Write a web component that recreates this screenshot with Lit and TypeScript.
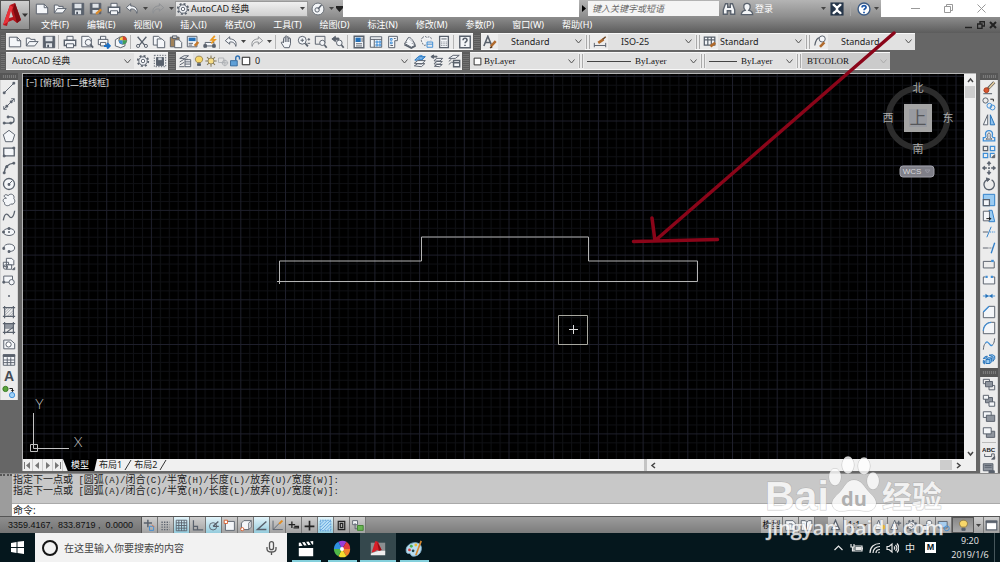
import { LitElement, html, css, svg, nothing, type SVGTemplateResult } from "lit";
import { customElement, property } from "lit/decorators.js";
import { classMap } from "lit/directives/class-map.js";

/* 16x16 glyphs. g = slate stroke, b = blue stroke, f = pale fill, k = solid slate. */
const ICONS: Record<string, SVGTemplateResult> = {
  new: svg`<path class="f" d="M1.500 2.500h9l4 4v7h-13z"/><path d="M10.500 2.500v4h4"/>`,
  open: svg`<path class="f" d="M1.500 12.500v-9h4l1 1.500h5v2.500"/><path class="f" d="M1.500 12.500l3.500-5h10l-4 5z"/>`,
  save: svg`<path class="k" d="M1.500 1.500h13v13h-13z"/><path fill="#dfe3e8" stroke="none" d="M4 2h8v5H4zM4.500 9.500h7v4.500h-7z"/><path fill="#4b535f" stroke="none" d="M6 11h2v3H6z"/>`,
  saveas: svg`<path class="k" d="M1.500 1.500h12v12h-12z"/><path fill="#dfe3e8" stroke="none" d="M4 2h7v4.500H4zM4 9h7v4H4z"/><path stroke="#d98a2b" stroke-width="2.500" d="M8 13.500l6-5"/>`,
  print: svg`<path class="f" d="M4.500 6V1.500h7V6"/><path class="f" stroke-width="1.600" d="M1.500 6h13v6h-13z"/><path class="f" d="M4 10h8v4.500H4z"/>`,
  preview: svg`<path class="f" d="M2 1.500h8l3 3v9H2z"/><circle class="f" cx="9.500" cy="8.500" r="3.500"/><path stroke-width="2" d="M12 11l3 3.500"/>`,
  publish: svg`<path class="f" d="M4 5V1.500h6V5M1.500 5h11v6h-11z"/><path class="f" d="M4 8.500h6v4H4z"/><path stroke="#1c6fc4" stroke-width="2.400" d="M8 12.500h5M11.500 9.500l3 3-3 3"/>`,
  dwf: svg`<path class="f" d="M1.500 5.500l5-3 6 2v8l-5 2-6-2z"/><circle cx="10" cy="6" r="4.500" fill="#f3d24a"/><path fill="#d8452f" stroke="none" d="M10 6V1.500A4.500 4.500 0 0 1 14.500 6z"/><path fill="#3da05c" stroke="none" d="M10 6h4.500A4.500 4.500 0 0 1 10 10.500z"/><path fill="#3d8fd8" stroke="none" d="M10 6v4.500A4.500 4.500 0 0 1 5.500 6z"/>`,
  cut: svg`<path stroke-width="1.500" d="M3 2l8 9.500M13 2L5 11.500"/><circle cx="3.500" cy="12.500" r="1.800"/><circle cx="12.500" cy="12.500" r="1.800"/>`,
  copy: svg`<path class="f" d="M1.500 1.500h6l2.500 2.500v7.500h-8.500z"/><path class="f" d="M6 4.500h5.500l3 3v7H6z"/>`,
  paste: svg`<path fill="#a0825a" d="M1.500 2.500h10v11h-10z"/><path fill="#ccc" d="M4 1h5v3H4z"/><path class="f" d="M6.500 5.500h5l3 3v6h-8z"/>`,
  match: svg`<path class="f" d="M1.500 1.500h11v12h-11z"/><path fill="#2370b8" stroke="none" d="M3 3h8v4H3z"/><path d="M3 9.500h5M3 11.500h4"/><path stroke="#c77a2c" stroke-width="3" d="M10 12.500l4-4.500"/>`,
  block: svg`<path class="f" d="M2.500 8.500h10v4h-10z"/><path class="k" d="M1 11h3v3H1zM11 11h3v3h-3z"/><path stroke="#eb9a22" stroke-width="2" d="M13.500 1l-4 4.500h4l-4 4"/>`,
  undo: svg`<path class="f" d="M6.500 2L1.500 6.500l5 4V8C10 7.500 12.500 9 13.500 13c1.500-5-1.500-8.500-7-8.500z"/>`,
  redo: svg`<path fill="none" stroke="#8c9094" d="M9.500 2l5 4.500-5 4V8C6 7.500 3.500 9 2.500 13 1 8 4 4.500 9.500 4.500z"/>`,
  pan: svg`<path class="f" d="M5 14.500L1.500 9c0-1.500 1.500-1.500 2.500 0V4c0-1.500 2-1.500 2 0V2c0-1.500 2-1.500 2 0v1c0-1.500 2-1.500 2 0v1.500c0-1.500 2-1.500 2 0V10l-1.500 4.500zM6 4v4M8 3v5M10 4v4"/>`,
  zoomrt: svg`<circle class="f" cx="6" cy="6" r="4.500"/><path stroke-width="2" d="M9.500 9.500l3 3.500"/><path d="M4 6h4M6 4v4M12 5h3M13.500 3.500v3M12 9.500h3"/>`,
  zoomwin: svg`<path d="M1.500 1.500h11v8M1.500 1.500v9H7"/><circle class="f" cx="9.500" cy="9" r="3"/><path stroke-width="2" d="M12 11.500l2.500 3"/>`,
  zoomprev: svg`<path class="k" d="M1 4.500L5 1.500v2h4v2H5v2z"/><circle class="f" cx="9.500" cy="9" r="3.200"/><path stroke-width="2" d="M12 11.500l2.500 3"/>`,
  props: svg`<path class="f" stroke-width="1.600" d="M2.500 1.500h11v13h-11z"/><path fill="#2370b8" stroke="none" d="M4 3h6v5H4z"/><path d="M4.500 10h7M4.500 12.500h7M11.500 3v5"/>`,
  dcenter: svg`<path class="f" d="M1.500 2h13v12h-13zM1.500 5h13M6 5v9"/><path class="b" d="M8 7h2v2H8zM11.500 7h2v2h-2zM8 10.500h2v2H8zM11.500 10.500h2v2h-2z"/>`,
  palette: svg`<path class="f" d="M3 1.500h10v5h-3v8H3z"/><path class="b" d="M5 4h2v2H5zM5 8h2v2H5z"/><path d="M9 4h2M5 12h3"/>`,
  sheet: svg`<path class="f" d="M1.500 9.500l5-2.500 8 4.500-5 2.500z"/><path class="f" d="M3 8L6 3l7.500 7"/><path class="f" d="M6 3c2-1 4 1 7.500 7"/><path stroke-width="1.600" d="M1.500 11l8 4 5-2.500"/>`,
  markup: svg`<path class="f" stroke-dasharray="2 1.300" d="M3 3c2-2.500 4-1 5 0 3-2 6 0 4.500 3M3 3c-2 2-2 4 0 6 0 3 3 3.500 4 2"/><path class="b" d="M8 8h6.500v6H8zM8 10.500h6.500"/>`,
  calc: svg`<path class="f" stroke-width="1.500" d="M3 1.500h10v13H3z"/><path d="M5 4.500h6M5 8h1M7.500 8h1M10 8h1M5 10h1M7.500 10h1M10 10h1M5 12h1M7.500 12h1M10 12h1"/>`,
  help: svg`<path class="f" stroke-width="1.600" d="M2 1.500h12v13H2z"/><path stroke-width="1.800" d="M5.800 6c0-3 4.500-3 4.500 0 0 1.500-2.200 1.500-2.200 3.300M8 11v1.500"/>`,
  gear: svg`<circle class="f" cx="8" cy="8" r="4.800"/><circle cx="8" cy="8" r="6" stroke-width="2" stroke-dasharray="2.300 2.400"/><circle fill="#fff" cx="8" cy="8" r="2"/>`,
  wsave: svg`<path stroke-dasharray="1.500 1.500" d="M1.500 1.500h13v13h-13z"/><path class="k" d="M4 4h8v9H4z"/><path fill="#cfd4da" stroke="none" d="M6 4h4v3H6z"/>`,
  layers: svg`<path class="f" d="M2 5l5-3h5l-4 3zM2 9l5-3h4M2 12.500l5-3M1.500 14.500h6"/><path class="f" d="M8 6.500h6.500v8H8zM8 9h6.500M8 11.500h6.500"/>`,
  bulb: svg`<path fill="#f7d76a" stroke="#8a7440" d="M5.500 10C1 6 3.500 1.500 8 1.500S15 6 10.500 10z"/><path class="k" d="M6 11.500h4v2.500H6z"/>`,
  sun: svg`<path stroke="#857a58" stroke-width="1.400" d="M8 .5v15M.5 8h15M2.700 2.700l10.600 10.600M13.300 2.700L2.700 13.300"/><circle cx="8" cy="8" r="4" fill="#f6dc85" stroke="#857a58"/>`,
  freeze: svg`<g opacity=".4"><path d="M2 4h7v6H2z"/><circle cx="10.500" cy="10.500" r="3.500"/><path d="M10.500 6v9M6 10.500h9"/></g>`,
  lock: svg`<path stroke="#2a6daf" stroke-width="1.800" d="M9 7V4c0-3.500 5-3.500 5 0v2"/><path fill="#5f9fd6" stroke="#2a5f93" d="M2 7.500h9v7H2z"/>`,
  swatch: svg`<path fill="#fff" stroke="#222" stroke-width="1.600" d="M2 2h12v12H2z"/>`,
  lay1: svg`<path fill="#7db7e8" stroke="#2370b8" d="M2 7l4-4h8l-4 4z"/><path class="f" d="M1.500 10.500l4-3h8.500l-4 4zM1.500 13.500l4-2.500h8l-4 3.500z"/><circle class="b" cx="9" cy="4" r="2.500"/>`,
  lay2: svg`<path class="k" d="M1 3l3-2v1.500h4v1H4V5z"/><path class="f" d="M5 7l3-2h6.500l-3 3H5zM5 10.500l3-2h6l-3 3H5zM5 14l3-2h6l-3 2.500z"/>`,
  lay3: svg`<path class="f" d="M2 5l5-3.500h7L9.500 5zM2 8.500l3-2.500M2 12l3-2.500h2"/><path class="f" stroke-width="1.600" d="M7.500 7.500h7v7h-7zM7.500 10h7"/>`,
  style: svg`<path stroke-width="1.800" d="M1 12.500L5.500 1.500 9.500 11M3 8.500h5"/><path stroke="#b06a2c" stroke-width="2.800" d="M9 13l5.500-6"/><path stroke="#5d3a1c" stroke-width="2" d="M8 14.500l2.500-1"/>`,
  dimstyle: svg`<path d="M1.500 9v5M14.500 9v5M1.500 12h13"/><path stroke="#b06a2c" stroke-width="3" d="M6 9l6-4"/><path stroke="#6b4424" stroke-width="1.600" d="M11 5l3.500-3"/>`,
  tabstyle: svg`<path class="f" stroke-width="1.400" d="M1.500 2.500h12v9h-12zM1.500 5.500h12M5.500 2.500v9M9.500 2.500v9"/><path stroke="#b06a2c" stroke-width="3" d="M8.500 13l5.500-4"/>`,
  mlstyle: svg`<path stroke-width="1.400" d="M2 12c1-6 3-9 6-9"/><circle class="f" cx="10.500" cy="4.500" r="3.500"/><path stroke="#b06a2c" stroke-width="3" d="M8 13.500l5-5"/>`,

  line: svg`<path d="M2.500 13.500l11-11"/><path class="k" d="M1.500 12.500h2v2h-2zM12.500 1.500h2v2h-2z"/>`,
  xline: svg`<path d="M2 14L14 2M10.500 2H14v3.500M2 10.500V14h3.500"/><path class="k" d="M4.500 9.500h2v2h-2zM9.500 4.500h2v2h-2z"/>`,
  pline: svg`<path stroke-width="1.500" d="M7 4.500h3c5 0 5 7 0 7H2.500"/><path class="k" d="M6 3.500h2v2H6zM1.500 10.500h2v2h-2zM9 10.500h2v2H9z"/>`,
  polygon: svg`<path class="f" d="M8 1.500l6.500 5-2.500 8H4l-2.500-8z"/>`,
  rect: svg`<path class="f" stroke-width="1.500" d="M2 3.500h12v9H2z"/><path class="k" d="M12.500 2.500h2v2h-2zM1.500 11.500h2v2h-2z"/>`,
  arc: svg`<path stroke-width="1.500" d="M2.500 14C3 7 7 3 14 2.500"/><path class="k" d="M1.500 12.500h2v2h-2zM12.500 1.500h2v2h-2zM4.500 5.500h2v2h-2z"/>`,
  circle: svg`<circle class="f" cx="8" cy="8" r="6.300" stroke-width="1.500"/><path d="M8 8l3.500-3.500"/><path class="k" d="M7 7.500h2v2H7z"/>`,
  cloud: svg`<path class="f" d="M5 6C0 4 3.500 0 7 3c3-3.500 8-1 6.500 3.500C16 9 14 14 10 12.500 7.500 16 2 14.500 3 11-.5 9 2 5.500 5 6z"/>`,
  spline: svg`<path stroke-width="1.500" d="M1.500 13C3 4 6 5 8 8s5 3 6.500-6"/>`,
  ellipse: svg`<ellipse class="f" cx="8" cy="8" rx="6.500" ry="4"/><path class="k" d="M7.500 7.500h1v1h-1zM.8 7h2v2h-2zM7 3h2v2H7z"/>`,
  earc: svg`<path class="f" d="M2 8c0-6 12.500-6 12.500 0 0 3-3 4-6.500 4"/><path class="k" d="M1 7.500h2v2H1zM7 11h2v2H7z"/>`,
  insert: svg`<path class="f" d="M5 1.500h6l2.500 2.500v5H5zM1.500 6h6v5h-6z"/><path class="f" d="M5 9h6v5H5z"/><circle cx="4" cy="11.500" r="2.500"/><path class="k" d="M14.500 12v2.500H12z"/>`,
  mkblock: svg`<path class="f" d="M2 3.500h10v7H2z"/><circle class="f" cx="11" cy="10.500" r="3"/><path class="k" d="M1 9.500h2v2H1z"/>`,
  point: svg`<path class="k" d="M7.500 7.500h1v1h-1z"/>`,
  hatch: svg`<path stroke-width=".8" stroke="#8d949d" d="M3 6l3-3M3 9l6-6M3 12l9-9M6 13l7-7M9 13l4-4"/><path stroke-width="1.300" d="M3 1v14M13 1v14M1 3h14M1 13h14"/>`,
  gradient: svg`<path fill="#9298a1" stroke="none" d="M3 3h10v6H3z"/><path stroke-width="1.300" d="M3 1v14M13 1v14M1 3h14M1 13h14M5 13l8-6"/>`,
  region: svg`<path class="f" d="M2 3.500h8l4.500 4v6H2z"/><circle fill="#fff" cx="7.500" cy="8.500" r="3"/>`,
  table: svg`<path class="f" d="M1.500 2h13v12h-13zM1.500 8h13M1.500 11h13M6 5v9M10 5v9"/><path class="k" d="M1.500 2h13v2h-13z"/>`,
  addsel: svg`<circle cx="4" cy="4.500" r="3" fill="#5aa33c" stroke="#3a7a25"/><circle cx="11.500" cy="11.500" r="3" fill="#9fd0f5" stroke="#3d8fd8"/><path stroke="#111" d="M8.500 4h3.500v3M10.500 6l1.500 1.500L13.500 6"/>`,

  erase: svg`<path stroke="#555" stroke-width="3.400" d="M7 8.500l7-7"/><path stroke="#e8cfa0" stroke-width="1.800" d="M8 8l6-6.500"/><circle cx="5" cy="10.500" r="2.800" fill="#d9562f" stroke="#a63c1c"/><path stroke-width="1.200" d="M1.500 14.500h10"/>`,
  dup: svg`<circle cx="4" cy="4" r="3"/><circle class="b" cx="8.500" cy="10" r="2.800"/><circle class="b" cx="12" cy="12" r="2.800"/><path stroke="#222" d="M9.500 2.500h3.500V5"/>`,
  mirror: svg`<path class="f" d="M6.500 2v11.500H1.500z"/><path fill="#8fc2ee" stroke="#2370b8" d="M9.500 2v11.500h5z"/>`,
  offset: svg`<path class="b" stroke-width="1.500" d="M1.500 13.500V10c4 0 3-2 2.500-4C3.500 .5 12.500.5 12 6c-.5 2-1 4 2.500 4v3.500z"/><path d="M4.500 11.500c3-1 2-4 2-5 0-2.500 3-2.500 3 0 0 1-1 4 2 5z"/>`,
  array: svg`<path stroke-width="1.400" d="M1.500 1.500h5v5h-5z"/><path class="b" stroke-width="1.400" d="M9.500 1.500h5v5h-5zM1.500 9.500h5v5h-5zM9.500 14.500v-5h5"/><path class="k" d="M14.500 11v3.500H11z"/>`,
  move: svg`<path stroke-width="1.600" stroke-dasharray="4 1.500 2 1.500" d="M8 1.500v13M1.500 8h13"/><path class="k" d="M8 .5l2 2.500H6zM8 15.500l2-2.500H6zM.5 8L3 6v4zM15.500 8L13 6v4z"/>`,
  rotate: svg`<path stroke-width="1.500" d="M6 3a6 6 0 1 0 5 .3"/><path class="k" d="M5 1l4 1.500-3 2.500z"/>`,
  scale: svg`<path fill="#9acbf2" stroke="#2f7fc9" d="M1.500 1.500h13v13h-13z"/><path class="f" stroke-width="1.400" d="M1.500 7.500h7v7h-7z"/>`,
  stretch: svg`<path fill="#9acbf2" stroke="#2f7fc9" d="M8 1.500h3.500l3 13H8z"/><path class="f" d="M1.500 2.500h7v11h-7z"/><path stroke="#111" d="M5 11h5M8.500 9.500L10 11l-1.500 1.500"/>`,
  trim: svg`<path stroke="#2f7fc9" d="M10.500 2l-5 12"/><path d="M1 8h6"/><path class="b" stroke-dasharray="1.500 1" d="M9 8h6"/>`,
  extend: svg`<path stroke="#2f7fc9" stroke-width="1.500" d="M14.500 2l-4 12"/><path d="M1 8h5"/><path stroke-dasharray="1.500 1" d="M6 8h6"/>`,
  brkpt: svg`<path d="M11 5H1.500v7.500H14V5"/><path class="b" stroke-width="2.600" d="M10.500 4.500h3"/>`,
  brk: svg`<path class="f" d="M4 4.500H1.500v8h13v-8H12"/><path class="b" stroke-width="2.600" d="M4 4.500h2.500M10 4.500h2.500"/>`,
  join: svg`<path class="b" d="M1 8h14"/><path fill="#2370b8" stroke="none" d="M4 5.500L7.500 8 4 10.500zM12 5.500L8.500 8l3.500 2.500z"/>`,
  chamfer: svg`<path class="f" d="M1.500 14.500V8L8 1.500h6.500v13z"/><path class="b" stroke-width="1.500" d="M1.500 8L8 1.500"/>`,
  fillet: svg`<path class="f" d="M1.500 14.500V11c0-5 4-9.500 9-9.500h4v13z"/><path class="b" stroke-width="1.500" d="M1.500 11c0-5 4-9.500 9-9.500"/>`,
  blend: svg`<path d="M1.500 14.500C2 11 2 9 4 7M12 9c2-2 2-4 2.500-7.500"/><path class="b" stroke-width="1.500" d="M4 7c3-5 5 5.500 8 2"/>`,
  explode: svg`<path fill="#9acbf2" stroke="#2370b8" d="M4.500 7.500l2.500-2h4v4.500l-2 2H4.500zM4.500 7.500H9V12M9 7.500l2-2"/><path fill="#9acbf2" stroke="#2370b8" d="M1.500 6.500L3 4.500l3-1-.5 2zM8 2.500l4-.5 2.500 1.500v3l-2 3v-5zM1.500 8.500l1.500.5v3.500l-1.500-1z"/>`,
  front: svg`<path d="M1.500 1.500h7v5h-7zM8 8.500h6.500v5H8z"/><path fill="#8e949d" d="M4 4h8v6H4z"/>`,
  back: svg`<path fill="#8e949d" d="M4 4h8v6H4z"/><path class="f" d="M1.500 1.500h6v4.500h-6zM8 9h6.500v5H8z"/>`,
  above: svg`<path class="f" d="M1.500 2h9v6.500h-9z"/><path fill="#8e949d" d="M5 6h9.500v7H5z"/>`,
  under: svg`<path fill="#8e949d" d="M5 6h9.500v7H5z"/><path class="f" d="M1.500 2h9v7h-9z"/>`,
  annofront: svg`<text x="0" y="6.500" font-size="7" font-weight="700" stroke="none" fill="#222" font-family="Liberation Sans, sans-serif">ABC</text><path d="M3 9v3h8V9h3v5"/><path class="k" d="M14.500 12v3H11z"/>`,
  hatchback: svg`<path fill="#8e949d" d="M1.500 2h11v8h-11zM3 4h8M3 6h8"/><path class="k" d="M8 10h6v5H8z"/>`,

  infer: svg`<path stroke-width="1.800" d="M6 1v9M1 5h10"/><path class="b" d="M8 9h5v5H8z"/><path stroke="#e06a3a" d="M11 7l3 3"/>`,
  snap: svg`<path stroke-width="1.600" stroke-dasharray="1.600 1.600" d="M3 4h10M3 7h10M3 10h10M3 13h10"/>`,
  grid: svg`<path d="M1.500 1.500h13v13h-13zM4.700 1.500v13M8 1.500v13M11.300 1.500v13M1.500 4.700h13M1.500 8h13M1.500 11.300h13"/>`,
  ortho: svg`<path stroke-width="1.500" d="M3 1.500v12h12M3 9h5v4.500"/>`,
  polar: svg`<circle cx="7.500" cy="9" r="4.500"/><path stroke-width="1.600" d="M7.500 9l6.500-6M7.500 9h7"/>`,
  osnap: svg`<path class="f" d="M3 3h11v11H3z"/><path stroke="#d95b2a" fill="#fff" d="M1.500 1.500h4v4h-4z"/>`,
  osnap3: svg`<path class="f" d="M3 5l3-3h9v8l-3 3H3z"/><path d="M12 13V5l3-3"/><circle cx="4" cy="12.500" r="2" fill="#fff" stroke="#d95b2a"/>`,
  otrack: svg`<path stroke-width="1.800" d="M14 3L3 13h11"/>`,
  ducs: svg`<path d="M2.500 2v11h12M2.500 13l8-8"/><path stroke="#e38b1e" stroke-width="2.500" d="M10 6l4-4"/>`,
  dyn: svg`<path stroke="#222" stroke-width="1.600" d="M6 3v8M2 7h8M8 11h6V9H9"/>`,
  lwt: svg`<path stroke="#222" stroke-width="2" d="M8 2v12M2 9h12"/>`,
  tpy: svg`<path fill="#b8def5" stroke="#2f7fc9" stroke-dasharray="1 1" d="M1.500 1.500h13v13h-13z"/><path class="b" stroke-width=".8" d="M2 6l4-4M2 10l8-8M2 14L14 2M6 14l8-8M10 14l4-4"/>`,
  qp: svg`<path stroke="#222" stroke-width="1.500" d="M4 3h8v10H4zM6.500 5.500h3v5h-3z"/>`,
  sc: svg`<path class="f" d="M2 2h6v5H2z"/><path d="M5 5v7h3"/><path fill="#67b552" stroke="#3c7f2c" d="M8 8h7v6H8z"/>`,
  paper: svg`<path class="f" d="M2 2h9l3 3v9H2z"/><path d="M6 6h4v5"/>`,
  book: svg`<path class="f" d="M1.500 2h5l2 2 2-2h4v12h-13zM8 4v9"/>`,
  anno: svg`<path class="f" stroke-width="1.600" d="M8 1.500L13 13H3z"/><path d="M5 9h6"/>`,
  annostar: svg`<path class="f" d="M7 1.500L11 13H2z"/><circle cx="12" cy="10" r="3" fill="#f1b737" stroke="none"/>`,
  annoplus: svg`<path class="f" d="M7 1.500L11 13H2z"/><path stroke-width="1.500" d="M12 2v6M9 5h6"/>`,
  padlock: svg`<path class="f" d="M2 8h8v6H2zM7 8V4c0-3 6-3 6 0v2"/>`,
  hw: svg`<path fill="#a6cdee" d="M1.500 3h11v8h-11z"/><circle class="b" cx="12" cy="11.500" r="3"/>`,
  clean: svg`<path fill="#fff" stroke-width="1.500" d="M1.500 2.500h13v11h-13z"/><path class="k" d="M1.500 2.500h13v2h-13z"/>`,
  navi: svg`<circle fill="#f3f5f7" stroke="#686e76" cx="8" cy="8" r="6.800"/><circle cx="7" cy="9" r="2.500"/><path stroke-width="1.800" d="M8 8l4-4.500"/>`,
  binoc: svg`<path fill="#f3f5f7" stroke-width="1.500" d="M4 2h2.500v4h3V2H12l2.500 7v5H10v-4H6v4H1.500V9z"/>`,
  person: svg`<path fill="#f3f5f7" stroke-width="1.500" d="M1.500 14.500c0-4 3-4.500 4.500-5C3 6 4 1.500 8 1.500S13 6 10 9.500c1.500.5 4.500 1 4.500 5z"/>`,
  xchg: svg`<path fill="#26364a" stroke="none" d="M.5.500h15v15H.5z"/><path stroke="#fff" stroke-width="2.600" d="M3.500 2.500c2 3 4.500 2 4.500 5.500s-2.500 2.500-4.500 5.500M12.500 2.500c-2 3-4.500 2-4.500 5.500s2.500 2.500 4.500 5.500"/>`,
  qmark: svg`<circle fill="#fff" stroke="#3c5c86" stroke-width="1.600" cx="8" cy="8" r="6.800"/><path stroke="#1d57a8" stroke-width="2" d="M5.800 6.300c0-3 4.500-3 4.500 0 0 1.500-2.200 1.500-2.200 3M8 11v1.800"/>`,
};

const icon = (name: string) =>
  svg`<svg class="icon" viewBox="0 0 16 16" aria-hidden="true">${ICONS[name] ?? nothing}</svg>`;

const shared = css`
  * { box-sizing: border-box; }
  .icon { width: 14px; height: 14px; fill: none; stroke: #59616c; stroke-width: 1.1; flex: none; display: block; }
  .icon .f { fill: #f4f6f9; }
  .icon .k { fill: #59616c; }
  .icon .b { stroke: #3f8ed6; }
  button { border: 0; padding: 0; margin: 0; background: none; font: inherit; color: inherit; display: flex; align-items: center; justify-content: center; flex: none; }
  select, input { border: 0; margin: 0; padding: 0; background: none; font: inherit; color: inherit; min-width: 0; outline: none; }
  select { appearance: none; }
`;

@customElement("cad-combo")
class CadCombo extends LitElement {
  @property() label = "";
  @property() value = "";
  @property({ type: Boolean }) disabled = false;
  static styles = [
    shared,
    css`
      :host { display: flex; align-items: center; background: #e1e1e1; height: 16px; min-width: 0; }
      select { flex: 1; height: 100%; }
      .chev { width: 7px; height: 5px; fill: none; stroke: #555; stroke-width: 1; margin-right: 3px; flex: none; }
      :host([disabled]) { background: #cbcbcb; color: #8a8a8a; }
      :host([disabled]) .chev { stroke: #aaa; }
      select:disabled { opacity: 1; }
    `,
  ];
  render() {
    return html`<slot></slot>
      <select aria-label=${this.label} ?disabled=${this.disabled}><option>${this.value}</option></select>
      <svg class="chev" viewBox="0 0 7 5" aria-hidden="true"><path d="M.5.500l3 3.500 3-3.500" /></svg>`;
  }
}

@customElement("app-root")
class AppRoot extends LitElement {
  static styles = [
    shared,
    css`
      :host { display: flex; flex-direction: column; position: relative; height: 100vh; overflow: hidden; background: #666; color: #222; font: 10px/12px "Noto Sans", "Noto Sans CJK SC", sans-serif; }

      .head { display: grid; grid-template-columns: 30px 1fr; background: linear-gradient(#a9a9a9, #8a8a8a 50%, #8c8c8c 52%, #5c5c5c); flex: none; height: 33px; }
      .logo { width: 30px; height: 30px; border: 1px solid #555; background: linear-gradient(#d0d0d0, #8d8d8d); }
      .logo svg { width: 28px; height: 28px; }
      .bars { display: flex; flex-direction: column; min-width: 0; }
      .title { display: flex; height: 17px; background: #fff; }
      .qat, .info { display: flex; align-items: center; background: linear-gradient(#b4b4b4, #8d8d8d); }
      .qat { padding-left: 3px; width: 313px; flex: none; }
      .qat button { width: 18px; height: 16px; }
      .qat button.drop { width: 8px; }
      .tri { width: 5px; height: 3px; fill: #444; }
      .workspace { display: flex; align-items: center; flex: 1; height: 16px; background: linear-gradient(#f0f0f0, #cfcfcf); border: 1px solid #999; margin-right: 1px; padding: 0 2px 0 0; }
      .workspace select { flex: 1; height: 14px; padding-left: 1px; font-size: 9px; }
      .spacer { flex: 1; }
      .info { width: 302px; flex: none; color: #fff; }
      .info .play { width: 9px; }
      .info .play svg { width: 4px; height: 7px; }
      .info input { width: 131px; height: 15px; background: #f4f4f4; font-size: 9px; font-style: italic; padding-left: 4px; color: #666; }
      .info input::placeholder { color: #666; opacity: 1; }
      .info .tool { width: 17px; margin-left: 1px; }
      .info .login { flex: 1; justify-content: flex-start; font-size: 9px; }
      .info .badge { width: 18px; }
      .info .aid { margin-left: 4px; padding-left: 4px; width: 22px; border-left: 1px solid #a8a8a8; }
      .info .drop { width: 9px; }
      .win { display: flex; width: 119px; flex: none; justify-content: flex-end; padding-right: 2px; }
      .win button { width: 33px; height: 17px; }
      .win svg { width: 9px; height: 9px; fill: none; stroke: #999; }
      .menu { display: flex; align-items: center; gap: 18px; height: 16px; padding: 0 3px 0 11px; color: #fff; font-size: 9px; }
      .menu button { white-space: nowrap; }
      .mdi { display: flex; gap: 4px; margin-left: auto; }
      .mdi svg { width: 8px; height: 8px; fill: none; stroke: #222; stroke-width: 1.400; display: block; }

      .row { display: flex; flex: none; height: 17px; margin-bottom: 2px; }
      .row.second { height: 18px; margin-bottom: 3px; }
      .grip { width: 6px; flex: none; background: repeating-linear-gradient(#5a5a5a 0 1px, #727272 1px 2px); border: 1px solid #5e5e5e; }
      .grip.wide { width: 8px; }
      .bar { display: flex; align-items: center; background: #ececec; flex: none; border: 1px solid #f8f8f8; border-width: 1px 0; font-size: 9px; }
      .bar button { width: 17px; height: 15px; }
      .bar button.drop { width: 9px; }
      .bar .sep { width: 1px; height: 14px; background: #b5b5b5; margin: 0 2px 0 1px; }
      .bar .div { width: 4px; height: 14px; border: 1px solid #aaa; border-width: 0 1px; margin: 0 1px; flex: none; }
      .std { width: 87px; padding-left: 13px; }
      .std.near { padding-left: 2px; }
      .spacecombo { width: 128px; padding-left: 6px; }
      .layer { width: 218px; }
      .layer .icon { width: 12px; height: 12px; }
      .layer .icon:last-child { width: 10px; margin-right: 4px; }
      .by { font-family: "Liberation Serif", serif; font-size: 9px; color: #111; }
      .by .icon { width: 9px; height: 9px; margin: 0 2px 0 3px; }
      .color { width: 108px; }
      .ltype { width: 116px; }
      .lweight { width: 90px; }
      .rule { width: 44px; height: 1px; background: #444; margin: 0 4px 0 3px; flex: none; }
      .rule.short { width: 28px; }
      .plot { width: 88px; padding-left: 5px; }

      .work { display: grid; grid-template-columns: 18px 1fr 18px; column-gap: 4px; flex: 1; min-height: 0; padding-right: 2px; }
      .tools { display: flex; flex-direction: column; min-height: 0; overflow: hidden; }
      .tools .stack { background: #ececec; display: flex; flex-direction: column; align-items: center; border: 1px solid #d6d6d6; border-width: 0 1px; flex: none; }
      .tools button { width: 16px; height: 16px; }
      .hgrip { height: 7px; background: repeating-linear-gradient(90deg, #5a5a5a 0 1px, #7a7a7a 1px 2px); border: 2px solid #565656; flex: none; }
      .mid { height: 9px; border-width: 3px 2px; }
      .tools .sep { width: 14px; height: 1px; background: #bbb; margin: 1px 0 2px; }
      .tools .letter { font: 700 14px/16px "Liberation Sans", sans-serif; color: #444b55; }

      .doc { display: grid; grid-template: minmax(0, 1fr) 12px / minmax(0, 1fr) 12px; border: 1px solid #b5b5b5; border-width: 1px 0 0 1px; margin-bottom: 2px; background: #f0f0f0; }
      .model { background: #000; position: relative; overflow: hidden; }
      .drawing { width: 100%; height: 100%; display: block; }
      .viewlabel { position: absolute; left: 3px; top: 3px; color: #ddd; font-size: 9px; display: flex; gap: 3px; }
      .cube { position: absolute; right: 8px; top: 5px; width: 76px; height: 102px; display: block; }
      .vscroll { display: flex; flex-direction: column; align-items: center; background: #f0f0f0; }
      .vscroll button, .hscroll button { width: 12px; height: 12px; }
      .vscroll svg, .hscroll svg { width: 7px; height: 7px; fill: none; stroke: #444; stroke-width: 1.500; }
      .vthumb { width: 10px; height: 12px; background: #cdcdcd; }
      .tabs { grid-column: 1 / -1; display: flex; background: #f0f0f0; font-size: 9px; }
      .tabnav { display: flex; }
      .tabnav button { width: 10px; height: 12px; border-right: 1px solid #ccc; }
      .tabnav svg { width: 7px; height: 7px; fill: #777; }
      .tab { display: flex; align-items: center; padding: 0 2px; color: #222; font-size: 9px; height: 12px; }
      .tab.on { background: #000; color: #fff; padding: 0 8px; clip-path: polygon(0 0, 100% 0, 92% 100%, 14% 100%); }
      .slash { width: 8px; height: 12px; stroke: #333; fill: none; }
      .hscroll { margin-left: auto; width: 332px; display: flex; align-items: center; border-left: 3px solid #c4c4c4; }
      .hthumb { width: 12px; height: 10px; background: #cdcdcd; margin-left: auto; }
      .corner { width: 12px; height: 12px; }

      .cmd { display: grid; grid-template-columns: 12px 1fr; background: #c8c8c8; border-top: 1px solid #8a8a8a; flex: none; height: 44px; border-bottom: 1px solid #555; }
      .cmdgrip { background: #9c9c9c; border-top: 2px dotted #555; }
      .cmdbody { display: flex; flex-direction: column; }
      .log { flex: 1; padding: 1px; font: 9px/11px "Liberation Mono", monospace; white-space: pre; }
      .log p { margin: 0; height: 11px; }
      .cjk { font-family: "Liberation Mono", "Noto Sans CJK SC", sans-serif; font-size: 10px; line-height: 11px; }
      .prompt { display: flex; align-items: center; height: 13px; background: #fff; border-top: 1px solid #aaa; font-size: 10px; padding-left: 1px; }
      .prompt input { flex: 1; height: 12px; }

      .status { display: flex; align-items: center; height: 16px; flex: none; background: linear-gradient(#9c9c9c, #7c7c7c); }
      .coords { width: 142px; padding-left: 8px; height: 16px; font: 9px/17px "Liberation Sans", sans-serif; color: #111; background: linear-gradient(#8e8e8e, #747474); border-right: 1px solid #555; white-space: pre; }
      .status button { height: 16px; min-width: 16px; background: linear-gradient(#cfcfcf, #a2a2a2); border-right: 1px solid #777; }
      .status button.on { background: linear-gradient(#e4f4fa, #94cbdc); }
      .status .icon { width: 13px; height: 13px; }
      .right { margin-left: auto; display: flex; font-size: 9px; color: #111; }
      .right button { gap: 2px; }
      .right button.text { width: 22px; }
      .right button.scale { width: 28px; }
      .right button.lit { width: 22px; background: linear-gradient(#888, #aaa); border: 1px solid #555; }
      .right .void { width: 13px; }
      .right button.narrow { min-width: 10px; width: 10px; }

      .task { display: flex; align-items: stretch; height: 29px; flex: none; background: #05171d; color: #e8e8e8; }
      .start { width: 35px; }
      .start svg { width: 13px; height: 13px; fill: #fff; }
      .search { display: flex; align-items: center; width: 252px; background: #f2f2f2; padding: 0 10px 0 7px; gap: 6px; color: #333; }
      .search input { flex: 1; font-size: 10px; font-family: "Noto Sans CJK SC", sans-serif; }
      .search input::placeholder { color: #444; opacity: 1; }
      .ring { width: 16px; height: 16px; border: 2px solid #151515; border-radius: 50%; }
      .mic { width: 11px; height: 14px; fill: none; stroke: #555; stroke-width: 1.300; }
      .apps { display: flex; margin-left: 1px; }
      .apps button { width: 36px; padding-top: 2px; background: linear-gradient(#84d0dc, #84d0dc) no-repeat center bottom / 29px 2px; }
      .apps button.on { background: linear-gradient(#84d0dc, #84d0dc) no-repeat center bottom / 36px 2px, #35484d; }
      .apps svg { width: 18px; height: 18px; }
      .tray { margin-left: auto; display: flex; align-items: center; }
      .tray button { width: 18px; height: 29px; }
      .tray svg { width: 13px; height: 12px; fill: none; stroke: #e8e8e8; stroke-width: 1.200; }
      .ime { width: 11px; height: 11px; background: #fff; color: #05171d; font: 700 9px/11px "Liberation Sans", sans-serif; text-align: center; margin: 0 10px 0 6px; }
      .clock { width: 48px; text-align: center; font-size: 9px; line-height: 14px; font-family: "Open Sans", sans-serif; white-space: nowrap; }
      .edge { width: 6px; height: 29px; border-left: 1px solid #46565b; }

      .over { position: absolute; pointer-events: none; }
      .note { inset: 0; width: 100%; height: 100%; }
      .brand { right: 48px; bottom: 18px; width: 190px; height: 92px; }
    `,
  ];

  private btn(name: string, cls = "") {
    return html`<button class=${cls} aria-label=${name}>${icon(name)}</button>`;
  }
  private drop(label: string) {
    return html`<button class="drop" aria-label=${label}><svg class="tri" viewBox="0 0 5 3"><path d="M0 0h5L2.500 3z" /></svg></button>`;
  }
  private sep() {
    return html`<span class="sep"></span>`;
  }
  private mixed(text: string) {
    return text
      .split(/([\x20-\x7e]+)/)
      .filter(Boolean)
      .map((part) => (/^[\x20-\x7e]/.test(part) ? part : html`<span class="cjk">${part}</span>`));
  }

  private header() {
    const menus = ["文件(F)", "编辑(E)", "视图(V)", "插入(I)", "格式(O)", "工具(T)", "绘图(D)", "标注(N)", "修改(M)", "参数(P)", "窗口(W)", "帮助(H)"];
    return html`<header class="head">
      <button class="logo" aria-label="应用程序菜单">
        <svg viewBox="0 0 28 28">
          <path fill="#b3141c" d="M2 24L9 4l5-2 6 17-4 3-4-3-5 2-1 4z" />
          <path fill="#e8323a" d="M2 24L9 4l3 2-5 15z" />
          <path fill="#7c0b12" d="M14 2l6 17-4 3-4-14z" />
          <path fill="#c8c8c8" d="M10 10l2 6-4 1z" />
          <path fill="#333" d="M21 12.500h6l-3 3.500z" />
        </svg>
      </button>
      <div class="bars">
        <div class="title">
          <div class="qat">
            ${["new", "open", "save", "saveas", "print", "undo"].map((n) => this.btn(n))}${this.drop("撤销列表")}
            ${this.btn("redo")}${this.drop("重做列表")}
            <div class="workspace">
              ${icon("gear")}
              <select aria-label="工作空间"><option>AutoCAD 经典</option></select>
              <svg class="tri" viewBox="0 0 5 3"><path d="M0 0h5L2.500 3z" /></svg>
            </div>
            ${this.btn("navi")}${this.drop("导航")}
            <button class="drop" aria-label="自定义"><svg width="7" height="6" viewBox="0 0 7 6"><path d="M0 0h7v2L3.500 6 0 2z" fill="#222" /></svg></button>
          </div>
          <span class="spacer"></span>
          <div class="info">
            <button class="play" aria-label="展开"><svg viewBox="0 0 4 7"><path d="M0 0l4 3.500L0 7z" /></svg></button>
            <input aria-label="搜索" placeholder="键入关键字或短语" />
            ${this.btn("binoc", "tool")}${this.btn("person", "tool")}
            <button class="login">登录</button>
            ${this.drop("登录选项")}${this.btn("xchg", "badge")}${this.btn("qmark", "aid")}${this.drop("帮助选项")}
          </div>
          <div class="win">
            <button aria-label="最小化"><svg viewBox="0 0 9 9"><path d="M0 4.500h9" /></svg></button>
            <button aria-label="还原"><svg viewBox="0 0 9 9"><path d="M.5 2.500h6v6h-6zM2.500 2.500v-2h6v6h-2" /></svg></button>
            <button aria-label="关闭"><svg viewBox="0 0 9 9"><path d="M.5.500l8 8M8.500.500l-8 8" /></svg></button>
          </div>
        </div>
        <nav class="menu">
          ${menus.map((m) => html`<button>${m}</button>`)}
          <div class="mdi">
            <button aria-label="最小化图形"><svg viewBox="0 0 8 8"><path d="M0 6.500h7" /></svg></button>
            <button aria-label="还原图形"><svg viewBox="0 0 8 8"><path d="M.5 3h4.500v4.500H.5zM3 3V.8h4.500V5H5" /></svg></button>
            <button aria-label="关闭图形"><svg viewBox="0 0 8 8"><path stroke-width="2" d="M1 1l6 6M7 1L1 7" /></svg></button>
          </div>
        </nav>
      </div>
    </header>`;
  }

  private toolbars() {
    const std = (names: string[]) => names.map((n) => this.btn(n));
    return html`<div class="row">
        <div class="grip"></div>
        <div class="bar">
          ${std(["new", "open", "save"])}${this.sep()}${std(["print", "preview", "publish", "dwf"])}${this.sep()}
          ${std(["cut", "copy", "paste", "match", "block"])}${this.sep()}${this.btn("undo")}${this.drop("撤销")}
          ${this.btn("redo")}${this.drop("重做")}${this.sep()}${std(["pan", "zoomrt", "zoomwin", "zoomprev"])}${this.sep()}
          ${std(["props", "dcenter", "palette", "sheet", "markup", "calc"])}${this.sep()}${this.btn("help")}
        </div>
        <div class="grip wide"></div>
        <div class="bar">
          ${this.btn("style")}<cad-combo class="std" label="文字样式" value="Standard"></cad-combo><span class="div"></span>
          ${this.btn("dimstyle")}<cad-combo class="std" label="标注样式" value="ISO-25"></cad-combo><span class="div"></span>
          ${this.btn("tabstyle")}<cad-combo class="std near" label="表格样式" value="Standard"></cad-combo><span class="div"></span>
          ${this.btn("mlstyle")}<cad-combo class="std" label="多重引线样式" value="Standard"></cad-combo>
        </div>
      </div>
      <div class="row second">
        <div class="grip"></div>
        <div class="bar">
          <cad-combo class="spacecombo" label="工作空间" value="AutoCAD 经典"></cad-combo>${std(["gear", "wsave"])}
        </div>
        <div class="grip wide"></div>
        <div class="bar">
          ${this.btn("layers")}
          <cad-combo class="layer" label="图层" value="0">${["bulb", "sun", "freeze", "lock", "swatch"].map(icon)}</cad-combo>
          ${std(["lay1", "lay2", "lay3"])}
        </div>
        <div class="grip wide"></div>
        <div class="bar">
          <cad-combo class="by color" label="颜色" value="ByLayer">${icon("swatch")}</cad-combo><span class="div"></span>
          <cad-combo class="by ltype" label="线型" value="ByLayer"><span class="rule"></span></cad-combo><span class="div"></span>
          <cad-combo class="by lweight" label="线宽" value="ByLayer"><span class="rule short"></span></cad-combo><span class="div"></span>
          <cad-combo class="by plot" label="打印样式" value="BTCOLOR" disabled></cad-combo>
        </div>
      </div>`;
  }

  private workspace() {
    const draw = ["line", "xline", "pline", "polygon", "rect", "arc", "circle", "cloud", "spline", "ellipse", "earc", "insert", "mkblock", "point", "hatch", "gradient", "region", "table"];
    const modify = ["erase", "dup", "mirror", "offset", "array", "move", "rotate", "scale", "stretch", "trim", "extend", "brkpt", "brk", "join", "chamfer", "fillet", "blend", "explode"];
    return html`<main class="work">
      <aside class="tools">
        <div class="hgrip"></div>
        <div class="stack">
          ${draw.map((n) => this.btn(n))}
          <button class="letter" aria-label="多行文字">A</button>
          ${this.btn("addsel")}
        </div>
      </aside>
      <section class="doc">
        <div class="model">
          <svg class="drawing" aria-hidden="true">
            <defs>
              <pattern id="grid" x="38.500" y="1.800" width="44.700" height="44.700" patternUnits="userSpaceOnUse">
                <path stroke="#0f1014" d="M9.500 0v45M18.400 0v45M27.300 0v45M36.300 0v45M0 9.500h45M0 18.400h45M0 27.300h45M0 36.300h45" />
                <path stroke="#1e1f2b" d="M.5 0v45M0 .5h45" />
              </pattern>
            </defs>
            <rect width="100%" height="100%" fill="url(#grid)" />
            <path fill="none" stroke="#b4b4b4" d="M256.500 210v-23h142v-24h167v24h109v20.500H254" />
            <path fill="none" stroke="#a8a8a0" d="M535.500 241.500h29v29h-29z" />
            <path stroke="#ddd" d="M546 255.500h9M550.500 251v9" />
            <path fill="none" stroke="#c4c4c4" d="M7.500 370.500h7v7h-7zM10.500 339v35.500H46" />
            <g fill="#c4c4c4" font-family="Lato" font-weight="300" font-size="14" text-anchor="middle">
              <text x="16.500" y="335">Y</text><text x="55" y="373">X</text>
            </g>
          </svg>
          <div class="viewlabel"><span>[−]</span><span>[俯视]</span><span>[二维线框]</span></div>
          <svg class="cube" viewBox="0 0 76 102" font-family="Noto Sans CJK SC" font-size="11" fill="#aaa" text-anchor="middle">
            <circle cx="38" cy="39" r="29.500" fill="none" stroke="#2c2c2c" stroke-width="6" />
            <text x="38" y="13">北</text><text x="38" y="74">南</text><text x="8" y="43">西</text><text x="68" y="43">东</text>
            <rect x="24" y="25" width="28" height="28" fill="#a4a4a4" /><rect x="29" y="30" width="18" height="18" fill="#989aa0" />
            <text x="38" y="45" font-size="17" fill="#55565a">上</text>
            <rect x="20" y="87" width="34" height="11" rx="3" fill="#7f7f88" stroke="#a2a2aa" />
            <text x="32" y="95" font-size="8" fill="#d8d8dc" font-family="Liberation Sans">WCS</text>
            <path d="M45 91h5l-2.500 3z" fill="none" stroke="#9a9aa4" />
          </svg>
        </div>
        <div class="vscroll">
          <button aria-label="向上"><svg viewBox="0 0 7 7"><path d="M1 5l2.500-3L6 5" /></svg></button>
          <div class="vthumb"></div>
          <span class="spacer"></span>
          <button aria-label="向下"><svg viewBox="0 0 7 7"><path d="M1 2l2.500 3L6 2" /></svg></button>
        </div>
        <div class="tabs">
          <div class="tabnav">
            <button aria-label="首个"><svg viewBox="0 0 7 7"><path d="M0 0h1v7H0zM6 0v7L2 3.500z" /></svg></button>
            <button aria-label="上一个"><svg viewBox="0 0 7 7"><path d="M5 0v7L1 3.500z" /></svg></button>
            <button aria-label="下一个"><svg viewBox="0 0 7 7"><path d="M2 0v7l4-3.500z" /></svg></button>
            <button aria-label="最后"><svg viewBox="0 0 7 7"><path d="M6 0h1v7H6zM1 0v7l4-3.500z" /></svg></button>
          </div>
          <button class="tab on">模型</button>
          <button class="tab">布局1</button><svg class="slash" viewBox="0 0 8 12"><path d="M7 1L1 11" /></svg>
          <button class="tab">布局2</button><svg class="slash" viewBox="0 0 8 12"><path d="M7 1L1 11" /></svg>
          <div class="hscroll">
            <button aria-label="向左"><svg viewBox="0 0 7 7"><path d="M5 1L2 3.500 5 6" /></svg></button>
            <div class="hthumb"></div>
            <button aria-label="向右"><svg viewBox="0 0 7 7"><path d="M2 1l3 2.500L2 6" /></svg></button>
            <span class="corner"></span>
          </div>
        </div>
      </section>
      <aside class="tools">
        <div class="hgrip"></div>
        <div class="stack">${modify.map((n) => this.btn(n))}</div>
        <div class="hgrip mid"></div>
        <div class="stack">
          ${["front", "back", "above", "under"].map((n) => this.btn(n))}
          <span class="sep"></span>${this.btn("annofront")}${this.btn("hatchback")}
        </div>
      </aside>
    </main>`;
  }

  private command() {
    const line = "指定下一点或 [圆弧(A)/闭合(C)/半宽(H)/长度(L)/放弃(U)/宽度(W)]:";
    const modes = ["infer", "snap", "grid", "ortho", "polar", "osnap", "osnap3", "otrack", "ducs", "dyn", "lwt", "tpy", "qp", "sc"];
    const active = new Set(["grid", "polar", "otrack", "tpy"]);
    return html`<section class="cmd">
        <div class="cmdgrip"></div>
        <div class="cmdbody">
          <div class="log"><p>${this.mixed(line)}</p><p>${this.mixed(line)}</p></div>
          <div class="prompt"><label for="cmd">命令:</label><input id="cmd" /></div>
        </div>
      </section>
      <footer class="status">
        <div class="coords">3359.4167,  833.8719 ,  0.0000</div>
        ${modes.map((m) => html`<button class=${classMap({ on: active.has(m) })} aria-label=${m}>${icon(m)}</button>`)}
        <div class="right">
          <button class="text">模型</button>${this.btn("paper")}${this.btn("book")}<span class="void"></span>
          ${this.btn("anno")}<button class="scale">1:1<svg class="tri" viewBox="0 0 5 3"><path d="M0 0h5L2.500 3z" /></svg></button>
          ${this.btn("annostar")}${this.btn("annoplus")}${this.btn("gear")}${this.btn("padlock")}${this.btn("hw")}
          ${this.btn("bulb", "lit")}
          <button class="narrow" aria-label="状态栏菜单"><svg class="tri" viewBox="0 0 5 3"><path d="M0 0h5L2.500 3z" /></svg></button>
          ${this.btn("clean")}
        </div>
      </footer>`;
  }

  private taskbar() {
    return html`<footer class="task">
      <button class="start" aria-label="开始"><svg viewBox="0 0 13 13"><path d="M0 2l5.500-1v5H0zM6.500.800L13 0v6H6.500zM0 7h5.500v5L0 11zM6.500 7H13v6l-6.500-1z" /></svg></button>
      <div class="search">
        <span class="ring"></span>
        <input aria-label="搜索" placeholder="在这里输入你要搜索的内容" />
        <svg class="mic" viewBox="0 0 11 14"><rect x="3.500" y=".7" width="4" height="8" rx="2" /><path d="M1 6v2c0 4 9 4 9 0V6M5.500 11v3" /></svg>
      </div>
      <div class="apps">
        <button aria-label="影视"><svg viewBox="0 0 20 20"><path fill="#fff" d="M2 9h16v9H2zM2 3l16-2v4L2 7z" /><path stroke="#05171d" stroke-width="1.600" d="M4.500 2l3 5M9 1.500l3 5M13.500 1l3 5" /></svg></button>
        <button aria-label="浏览器"><svg viewBox="0 0 20 20">
          <path fill="#9a3fd8" d="M10 10L6 2a9 9 0 0 1 9 0z" /><path fill="#e23c3c" d="M10 10l5-8a9 9 0 0 1 4 8z" />
          <path fill="#f0832b" d="M10 10h9a9 9 0 0 1-4 8z" /><path fill="#f4dc2f" d="M10 10l5 8a9 9 0 0 1-9 0z" />
          <path fill="#4fb848" d="M10 10l-4 8a9 9 0 0 1-5-8z" /><path fill="#2f8fe0" d="M10 10H1a9 9 0 0 1 5-8z" />
          <circle cx="10" cy="10" r="2.200" fill="#fff" /></svg></button>
        <button class="on" aria-label="AutoCAD"><svg viewBox="0 0 20 20"><path fill="#8b8f91" d="M2 3h16v12H2z" /><path fill="#eee" d="M11 12h7v5H2v-2z" /><path fill="#d81e28" d="M3 14L7 1l3 1 4 9-3 1-2-1-3 2z" /><path fill="#8f0d14" d="M9 2l5 9-3 1z" /></svg></button>
        <button aria-label="画图"><svg viewBox="0 0 20 20"><path fill="#b9dcef" stroke="#7fb0cc" d="M1.500 13C0 7 6 3 11 3s8 3 7 8-5 7-9 7c-3 0-2-3-4-3s-3 0-3.500-2z" /><circle cx="5" cy="11" r="1.600" fill="#d84040" /><circle cx="7" cy="7" r="1.600" fill="#4cae4c" /><circle cx="12" cy="5.500" r="1.600" fill="#eebb33" /><circle cx="9" cy="12" r="1.500" fill="#244" /><path stroke="#d8882f" stroke-width="1.800" d="M12 17l6-16" /></svg></button>
      </div>
      <div class="tray">
        <button aria-label="隐藏的图标"><svg viewBox="0 0 13 12"><path d="M2.500 8l4-4 4 4" /></svg></button>
        <button aria-label="电源"><svg viewBox="0 0 13 12"><path d="M4 4h8v5H4zM12.500 5.500v2M1 2v3h3V2M2.500 5v4H4" /><path fill="#e8e8e8" d="M6 5.500h5v2H6z" /></svg></button>
        <button aria-label="网络"><svg viewBox="0 0 13 12"><path d="M2 11C2 5 6 1.500 12 1.500M5 11c0-4 3-6.500 7-6.500M8 11c0-2 1.500-3.500 4-3.500M10.500 11l1-1" /></svg></button>
        <button aria-label="音量"><svg viewBox="0 0 13 12"><path d="M1 4.500h2L6 2v8L3 7.500H1zM8 4.500c1 1 1 2 0 3M9.500 3c2 2 2 4 0 6M11 1.500c2.500 3 2.500 6 0 9" /></svg></button>
        <button aria-label="输入法">中</button>
        <span class="ime">M</span>
        <div class="clock">9:20<br />2019/1/6</div>
        <span class="edge"></span>
      </div>
    </footer>`;
  }

  render() {
    return html`${this.header()}${this.toolbars()}${this.workspace()}${this.command()}${this.taskbar()}
      <svg class="over note" fill="none" stroke="#8a0519" stroke-width="3.500" stroke-linecap="round" aria-hidden="true">
        <path d="M894 33L657 239M652 218l3 23M633.500 241.500L717.500 239.500" />
      </svg>
      <svg class="over brand" viewBox="0 0 190 92" fill="#fff" fill-opacity=".8" stroke="#999" stroke-opacity=".5" stroke-width="1" paint-order="stroke" aria-hidden="true">
        <text x="3" y="58" font-family="Liberation Sans" font-weight="700" font-size="41">Bai</text>
        <path d="M92 28c8 0 10 7 15 12s9 9 6 15c-4 7-13 3-21 3s-17 4-21-3c-3-6 2-10 7-15s6-12 14-12z" />
        <ellipse cx="73" cy="25" rx="6" ry="8.500" /><ellipse cx="86" cy="13" rx="6" ry="8.500" /><ellipse cx="102" cy="14" rx="6" ry="8.500" /><ellipse cx="111" cy="29" rx="6" ry="8.500" />
        <text x="92" y="54" text-anchor="middle" fill="#b0b0b0" fill-opacity="1" stroke="none" font-family="Open Sans" font-weight="700" font-size="20">du</text>
        <text x="120" y="55" font-family="Noto Sans CJK SC" font-weight="700" font-size="30">经验</text>
        <text x="5" y="83" font-family="Open Sans" font-weight="600" font-size="20">jingyan.baidu.com</text>
      </svg>`;
  }
}
